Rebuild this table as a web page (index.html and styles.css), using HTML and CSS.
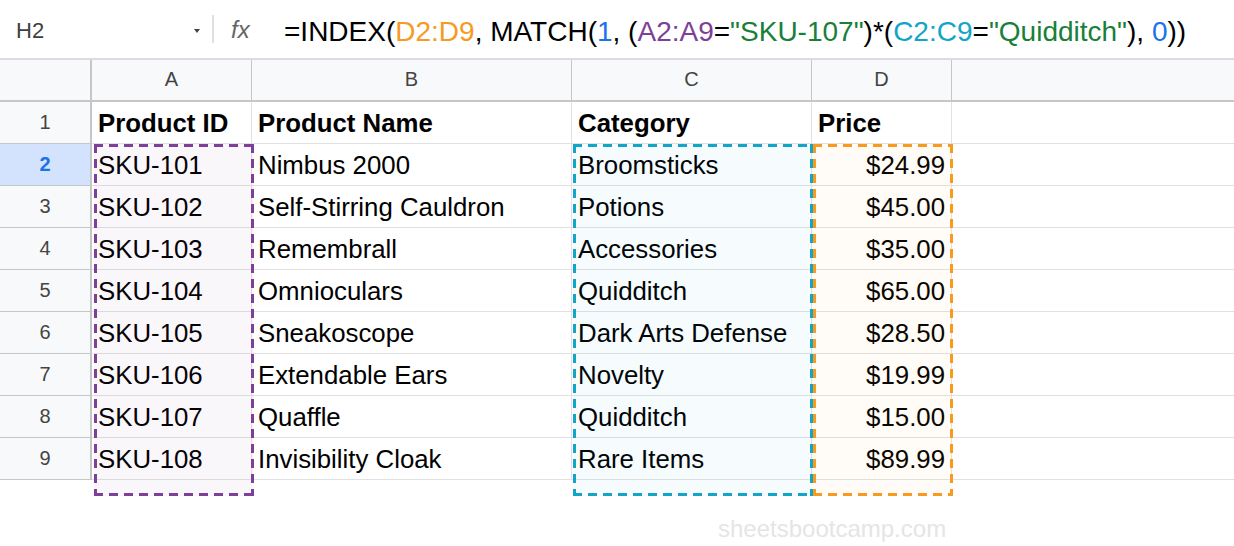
FILE: index.html
```html
<!DOCTYPE html>
<html>
<head>
<meta charset="utf-8">
<link rel="stylesheet" href="styles.css">
</head>
<body>
<div class="formula-bar">
  <div class="namebox"><span class="ref">H2</span><span class="caret"></span></div>
  <div class="sep"></div>
  <div class="fx">fx</div>
  <div class="formula">=INDEX(<span class="c-orange">D2:D9</span>, MATCH(<span class="c-blue">1</span>, (<span class="c-purple">A2:A9</span>=<span class="c-green">"SKU-107"</span>)*(<span class="c-cyan">C2:C9</span>=<span class="c-green">"Quidditch"</span>), <span class="c-blue">0</span>))</div>
</div>

<div class="sheet">
  <div class="grid">
    <div class="corner"></div>
    <div class="colh">A</div>
    <div class="colh">B</div>
    <div class="colh">C</div>
    <div class="colh">D</div>
    <div class="colh last"></div>

    <div class="rowh">1</div>
    <div class="cell b">Product ID</div>
    <div class="cell b">Product Name</div>
    <div class="cell b">Category</div>
    <div class="cell b">Price</div>
    <div class="cell last"></div>

    <div class="rowh sel">2</div>
    <div class="cell">SKU-101</div>
    <div class="cell">Nimbus 2000</div>
    <div class="cell">Broomsticks</div>
    <div class="cell num">$24.99</div>
    <div class="cell last"></div>

    <div class="rowh">3</div>
    <div class="cell">SKU-102</div>
    <div class="cell">Self-Stirring Cauldron</div>
    <div class="cell">Potions</div>
    <div class="cell num">$45.00</div>
    <div class="cell last"></div>

    <div class="rowh">4</div>
    <div class="cell">SKU-103</div>
    <div class="cell">Remembrall</div>
    <div class="cell">Accessories</div>
    <div class="cell num">$35.00</div>
    <div class="cell last"></div>

    <div class="rowh">5</div>
    <div class="cell">SKU-104</div>
    <div class="cell">Omnioculars</div>
    <div class="cell">Quidditch</div>
    <div class="cell num">$65.00</div>
    <div class="cell last"></div>

    <div class="rowh">6</div>
    <div class="cell">SKU-105</div>
    <div class="cell">Sneakoscope</div>
    <div class="cell">Dark Arts Defense</div>
    <div class="cell num">$28.50</div>
    <div class="cell last"></div>

    <div class="rowh">7</div>
    <div class="cell">SKU-106</div>
    <div class="cell">Extendable Ears</div>
    <div class="cell">Novelty</div>
    <div class="cell num">$19.99</div>
    <div class="cell last"></div>

    <div class="rowh">8</div>
    <div class="cell">SKU-107</div>
    <div class="cell">Quaffle</div>
    <div class="cell">Quidditch</div>
    <div class="cell num">$15.00</div>
    <div class="cell last"></div>

    <div class="rowh">9</div>
    <div class="cell">SKU-108</div>
    <div class="cell">Invisibility Cloak</div>
    <div class="cell">Rare Items</div>
    <div class="cell num">$89.99</div>
    <div class="cell last"></div>
  </div>

  <div class="range range-a"></div>
  <div class="range range-c"></div>
  <div class="range range-d"></div>

  <div class="watermark">sheetsbootcamp.com</div>
</div>
</body>
</html>
```

FILE: styles.css
```css
* { box-sizing: border-box; }
html, body {
  margin: 0;
  padding: 0;
  background: #ffffff;
  font-family: "Liberation Sans", Arial, sans-serif;
  color: #000;
}

.formula-bar {
  height: 60px;
  border-bottom: 2px solid #dadce0;
  display: flex;
  align-items: center;
}
.namebox {
  width: 212px;
  display: flex;
  align-items: center;
  justify-content: space-between;
  padding: 3px 12px 0 16px;
}
.ref {
  font-size: 22px;
  color: #3c4043;
}
.caret {
  width: 0;
  height: 0;
  border-left: 3px solid transparent;
  border-right: 3px solid transparent;
  border-top: 4px solid #444;
}
.sep {
  width: 2px;
  height: 28px;
  background: #e0e0e0;
}
.fx {
  width: 70px;
  padding: 2px 0 0 17px;
  font-size: 24px;
  font-style: italic;
  color: #666;
  font-family: "Liberation Sans", sans-serif;
}
.formula {
  font-size: 28px;
  color: #000;
  white-space: nowrap;
  padding-top: 5px;
}
.c-orange { color: #f79a1e; }
.c-blue { color: #1a73e8; }
.c-purple { color: #7e3f98; }
.c-green { color: #188038; }
.c-cyan { color: #12a5c8; }

.sheet {
  position: relative;
  height: 486px;
}
.grid {
  display: grid;
  grid-template-columns: 92px 160px 320px 240px 140px 1fr;
  grid-auto-rows: 42px;
}
.corner, .colh {
  background: #f8f9fa;
  border-bottom: 2px solid #c4c7c5;
  border-right: 1px solid #c4c7c5;
}
.corner { border-right: 2px solid #c4c7c5; }
.colh {
  display: flex;
  align-items: center;
  justify-content: center;
  font-size: 20px;
  color: #444;
  padding-bottom: 1px;
}
.colh.last { border-right: none; }
.rowh {
  background: #f8f9fa;
  border-right: 2px solid #c4c7c5;
  border-bottom: 1px solid #c4c7c5;
  display: flex;
  align-items: center;
  justify-content: center;
  font-size: 20px;
  color: #444;
}
.rowh.sel {
  background: #d3e3fd;
  color: #1a73e8;
  font-weight: bold;
}
.cell {
  border-right: 1px solid #e1e1e1;
  border-bottom: 1px solid #e1e1e1;
  display: flex;
  align-items: center;
  padding: 2px 6px 0;
  font-size: 25.8px;
  white-space: nowrap;
  overflow: hidden;
}
.cell.b { font-weight: bold; }
.cell.num { justify-content: flex-end; }
.cell.last { border-right: none; }

.range {
  position: absolute;
  top: 84px;
  height: 352px;
  pointer-events: none;
  background:
    repeating-linear-gradient(90deg, var(--c) 0 9px, transparent 9px 15px) left top / 100% 3px no-repeat,
    repeating-linear-gradient(90deg, var(--c) 0 9px, transparent 9px 15px) left bottom / 100% 3px no-repeat,
    repeating-linear-gradient(180deg, var(--c) 0 9px, transparent 9px 15px) left top / 3px 100% no-repeat,
    repeating-linear-gradient(180deg, var(--c) 0 9px, transparent 9px 15px) right top / 3px 100% no-repeat,
    var(--t);
}
.range-a {
  --c: #7e3f98;
  --t: rgba(126, 63, 152, 0.04);
  left: 94px;
  width: 160px;
}
.range-c {
  --c: #12a5c8;
  --t: rgba(18, 165, 200, 0.04);
  left: 573px;
  width: 240px;
}
.range-d {
  --c: #f79a1e;
  --t: rgba(247, 154, 30, 0.04);
  left: 813px;
  width: 140px;
}

.watermark {
  margin: 35px 0 0 718px;
  font-size: 24px;
  color: #e5e5e5;
}
```
